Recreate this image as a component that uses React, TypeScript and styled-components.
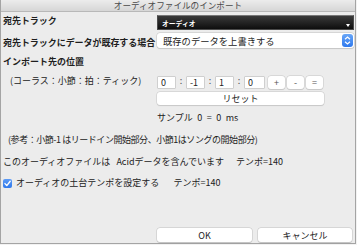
import React from 'react';
import styled, { createGlobalStyle } from 'styled-components';

const GlobalStyle = createGlobalStyle`
  body {
    margin: 0;
    background: #f2f2f2;
    font-family: "Noto Sans CJK JP", "Noto Sans", sans-serif;
    color: #1e1e1e;
  }
`;

const App: React.FC = () => {
  return (
    <>
      <GlobalStyle />
      <Window>
        <TitleBar>オーディオファイルのインポート</TitleBar>
        <Body>
          <FormRow $top={3}>
            <Label $align="start">宛先トラック</Label>
            <DarkSelect>
              オーディオ
              <DarkArrow />
            </DarkSelect>
          </FormRow>

          <FormRow $top={3}>
            <Label $align="end">宛先トラックにデータが既存する場合</Label>
            <PopUp>
              既存のデータを上書きする
              <Stepper>
                <svg width="7" height="9" viewBox="0 0 7 9">
                  <path d="M1 3.2 L3.5 1 L6 3.2 M1 5.8 L3.5 8 L6 5.8" fill="none" stroke="#fff" strokeWidth="1.2" />
                </svg>
              </Stepper>
            </PopUp>
          </FormRow>

          <SectionTitle>インポート先の位置</SectionTitle>

          <PositionGrid>
            <SubLabel>(コーラス：小節：拍：ティック)</SubLabel>
            <Controls>
              <FieldRow>
                <NumField $w={19} readOnly value="0" />
                <Colon>:</Colon>
                <NumField $w={19} readOnly value="-1" />
                <Colon>:</Colon>
                <NumField $w={19} readOnly value="1" />
                <Colon>:</Colon>
                <NumField $w={21} readOnly value="0" />
                <StepButton>+</StepButton>
                <StepButton>-</StepButton>
                <StepButton>=</StepButton>
              </FieldRow>
              <ResetButton>リセット</ResetButton>
              <SampleText>サンプル 0 = 0 ms</SampleText>
            </Controls>
          </PositionGrid>

          <InfoText $top={10} $indent={5} $ls={-0.45} $ws={0}>
            (参考：小節-1 はリードイン開始部分、小節1はソングの開始部分)
          </InfoText>
          <InfoText $top={10} $indent={0} $ls={0} $ws={4}>
            このオーディオファイルは Acidデータを含んでいます&nbsp;&nbsp;テンポ=140
          </InfoText>

          <CheckRow>
            <CheckBox>
              <svg width="9" height="9" viewBox="0 0 9 9">
                <path d="M2 4.6 L3.8 6.6 L7.2 2.2" fill="none" stroke="#fff" strokeWidth="1.4" strokeLinecap="round" strokeLinejoin="round" />
              </svg>
            </CheckBox>
            <span>オーディオの土台テンポを設定する&nbsp;&nbsp;テンポ=140</span>
          </CheckRow>

          <Footer>
            <DialogButton $w={95}>OK</DialogButton>
            <DialogButton $w={94}>キャンセル</DialogButton>
          </Footer>
        </Body>
      </Window>
    </>
  );
};

export default App;

const Window = styled.div`
  width: 356px;
  height: 244px;
  box-sizing: border-box;
  border: 1px solid #a4a4a4;
  border-top: none;
  background: #ececec;
  display: flex;
  flex-direction: column;
`;

const TitleBar = styled.div`
  height: 11px;
  line-height: 11px;
  flex-shrink: 0;
  text-align: center;
  font-size: 8.6px;
  color: #4a4a4a;
  background: linear-gradient(#ececec, #d6d6d6);
  border-bottom: 1px solid #b8b8b8;
`;

const Body = styled.div`
  flex: 1;
  display: flex;
  flex-direction: column;
  padding: 0 1px 1px 2px;
`;

const FormRow = styled.div<{ $top: number }>`
  display: grid;
  grid-template-columns: 154px 197px;
  margin-top: ${(p) => p.$top}px;
  height: 15px;
`;

const Label = styled.div<{ $align: 'start' | 'end' }>`
  align-self: ${(p) => p.$align};
  font-size: 9px;
  line-height: 11px;
  font-weight: 700;
  white-space: nowrap;
  letter-spacing: -0.05px;
`;

const DarkSelect = styled.div`
  position: relative;
  box-sizing: border-box;
  height: 15px;
  padding-left: 4px;
  font-size: 6.8px;
  font-weight: 700;
  line-height: 14px;
  color: #fff;
  background: linear-gradient(#3a3a3a, #0e0e0e);
  border: 1px solid #4a4a4a;
  border-top-color: #777;
`;

const DarkArrow = styled.span`
  position: absolute;
  right: 3px;
  bottom: 2px;
  width: 0;
  height: 0;
  border-left: 2.5px solid transparent;
  border-right: 2.5px solid transparent;
  border-top: 3px solid #fff;
`;

const PopUp = styled.div`
  box-sizing: border-box;
  height: 15px;
  display: flex;
  align-items: center;
  justify-content: space-between;
  padding: 0 1px 0 6px;
  font-size: 9.3px;
  color: #222;
  background: #fff;
  border-radius: 3px;
  box-shadow: 0 0 0 0.5px #c4c4c4, 0 0.5px 1px rgba(0, 0, 0, 0.15);
`;

const Stepper = styled.div`
  width: 11px;
  height: 13px;
  border-radius: 3px;
  background: linear-gradient(#69a6f7, #2e79ee);
  display: flex;
  align-items: center;
  justify-content: center;
`;

const SectionTitle = styled.div`
  margin-top: 8px;
  font-size: 9px;
  line-height: 12px;
  font-weight: 700;
`;

const PositionGrid = styled.div`
  display: grid;
  grid-template-columns: 154px auto;
  margin-top: 8px;
`;

const SubLabel = styled.div`
  padding-left: 7px;
  font-size: 9px;
  line-height: 10px;
  white-space: nowrap;
  color: #222;
`;

const Controls = styled.div`
  display: flex;
  flex-direction: column;
  align-items: flex-start;
`;

const FieldRow = styled.div`
  display: flex;
  align-items: center;
  height: 13px;
`;

const NumField = styled.input<{ $w: number }>`
  box-sizing: border-box;
  width: ${(p) => p.$w}px;
  height: 13px;
  margin: 0;
  padding: 0 0 0 3px;
  border: 1px solid #cfcfcf;
  border-radius: 1px;
  background: #fff;
  font-family: "Noto Sans CJK JP", "Noto Sans", sans-serif;
  font-size: 9px;
  color: #222;
  outline: none;
`;

const Colon = styled.span`
  width: 10px;
  text-align: center;
  font-size: 9px;
  line-height: 10px;
  color: #555;
  align-self: flex-start;
`;

const StepButton = styled.button`
  box-sizing: border-box;
  width: 17px;
  height: 13px;
  margin: 0 0 0 2px;
  padding: 0;
  border: none;
  border-radius: 3px;
  background: #fff;
  box-shadow: 0 0 0 0.5px #c8c8c8, 0 0.5px 1px rgba(0, 0, 0, 0.15);
  font-family: "Noto Sans CJK JP", "Noto Sans", sans-serif;
  font-size: 9px;
  line-height: 12px;
  color: #555;
  &:first-of-type {
    margin-left: 3px;
  }
`;

const ResetButton = styled.button`
  box-sizing: border-box;
  width: 167px;
  height: 13px;
  margin: 3px 0 0;
  padding: 0;
  border: none;
  border-radius: 3px;
  background: #fff;
  box-shadow: 0 0 0 0.5px #c8c8c8, 0 0.5px 1px rgba(0, 0, 0, 0.15);
  font-family: "Noto Sans CJK JP", "Noto Sans", sans-serif;
  font-size: 9px;
  line-height: 12px;
  color: #222;
`;

const SampleText = styled.div`
  margin-top: 7px;
  font-size: 9px;
  line-height: 12px;
  word-spacing: 2.5px;
  color: #222;
`;

const InfoText = styled.div<{ $top: number; $indent: number; $ls: number; $ws: number }>`
  margin-top: ${(p) => p.$top}px;
  padding-left: ${(p) => p.$indent}px;
  font-size: 9px;
  line-height: 12px;
  letter-spacing: ${(p) => p.$ls}px;
  word-spacing: ${(p) => p.$ws}px;
  white-space: nowrap;
  color: #222;
`;

const CheckRow = styled.div`
  margin-top: 9px;
  display: flex;
  align-items: center;
  gap: 4px;
  font-size: 9px;
  line-height: 12px;
  word-spacing: 5px;
  color: #222;
  white-space: nowrap;
`;

const CheckBox = styled.span`
  width: 9px;
  height: 9px;
  border-radius: 2px;
  background: linear-gradient(#5d9bf5, #2f78ec);
  display: flex;
  align-items: center;
  justify-content: center;
`;

const Footer = styled.div`
  margin-top: auto;
  display: flex;
  gap: 6px;
  padding-left: 154px;
`;

const DialogButton = styled.button<{ $w: number }>`
  box-sizing: border-box;
  width: ${(p) => p.$w}px;
  height: 14px;
  margin: 0;
  padding: 0;
  border: none;
  border-radius: 3px;
  background: #fff;
  box-shadow: 0 0 0 0.5px #c4c4c4, 0 0.5px 1px rgba(0, 0, 0, 0.18);
  font-family: "Noto Sans CJK JP", "Noto Sans", sans-serif;
  font-size: 9px;
  line-height: 13px;
  color: #222;
`;
